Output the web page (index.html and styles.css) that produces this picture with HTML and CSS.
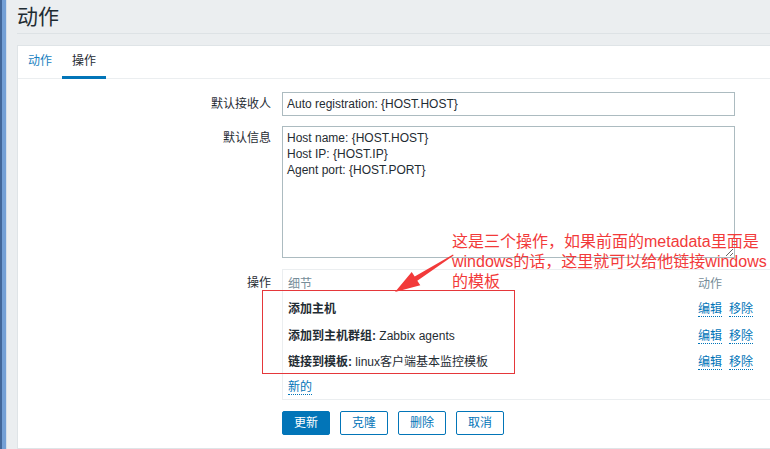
FILE: index.html
```html
<!doctype html>
<html lang="zh-CN">
    <head>
        <meta charset="utf-8">
        <title>动作</title>
        <link rel="stylesheet" href="styles.css">
    </head>
    <body>
        <div class="edge"></div>
        <div class="page">
            <div class="header">
                <h1>动作</h1>
            </div>
            <div class="panel">
                <ul class="tabs">
                    <li class="tab"><a>动作</a></li>
                    <li class="tab active"><a>操作</a></li>
                </ul>
                <div class="form">
                    <div class="row">
                        <label class="label">默认接收人</label>
                        <input class="field" type="text" value="Auto registration: {HOST.HOST}">
                    </div>
                    <div class="row">
                        <label class="label label-top">默认信息</label>
                        <textarea class="field area">Host name: {HOST.HOST}
Host IP: {HOST.IP}
Agent port: {HOST.PORT}</textarea>
                    </div>
                    <div class="row row-ops">
                        <label class="label label-ops">操作</label>
                        <div class="ops">
                            <div class="ops-head">
                                <span class="col-detail">细节</span>
                                <span class="col-action">动作</span>
                            </div>
                            <div class="ops-row first">
                                <span class="col-detail"><b>添加主机</b></span>
                                <span class="col-action"><a class="link">编辑</a><a class="link">移除</a></span>
                            </div>
                            <div class="ops-row">
                                <span class="col-detail"><b>添加到主机群组:</b> Zabbix agents</span>
                                <span class="col-action"><a class="link">编辑</a><a class="link">移除</a></span>
                            </div>
                            <div class="ops-row">
                                <span class="col-detail"><b>链接到模板:</b> linux客户端基本监控模板</span>
                                <span class="col-action"><a class="link">编辑</a><a class="link">移除</a></span>
                            </div>
                            <div class="ops-new">
                                <a class="link">新的</a>
                            </div>
                        </div>
                    </div>
                    <div class="buttons">
                        <button class="btn primary">更新</button>
                        <button class="btn">克隆</button>
                        <button class="btn">删除</button>
                        <button class="btn">取消</button>
                    </div>
                </div>
            </div>
        </div>

        <!-- annotation drawn over the screenshot -->
        <div class="note-box"></div>
        <svg class="note-arrow" width="770" height="449" viewBox="0 0 770 449">
            <polygon points="453,254.5 453.6,255.6 417.3,280.7 420.3,285.3 395,292 411.7,271.9 414.7,276.5" fill="#f23a3a"/>
        </svg>
        <p class="note-text">这是三个操作，如果前面的metadata里面是<br>windows的话，这里就可以给他链接windows<br>的模板</p>
    </body>
</html>
```

FILE: styles.css
```css
body {
    margin: 0;
    background: #ebeef0;
    font-family: "Liberation Sans", "Noto Sans CJK SC", sans-serif;
    font-size: 12px;
    color: #1f2c33;
    display: flex;
    height: 449px;
    overflow: hidden;
}
.edge {
    width: 7px;
    flex: none;
    background: linear-gradient(to right, #42679a 0 2px, #74a0d6 2px 6px, #d5dfea 6px 7px);
}
.page {
    flex: 1;
    padding-left: 10px;
    display: flex;
    flex-direction: column;
}
.header {
    height: 33px;
    border-bottom: 1px solid #dde2e5;
}
h1 {
    margin: 0;
    font-size: 21px;
    font-weight: normal;
    line-height: 33px;
    color: #1f2c33;
}
.panel {
    flex: 1;
    margin-top: 11px;
    margin-right: -20px;
    background: #ffffff;
    border: 1px solid #dfe4e7;
}

/* tabs */
.tabs {
    list-style-type: none;
    margin: 0;
    padding: 0;
    display: flex;
    border-bottom: 1px solid #ebeef0;
}
.tab a {
    display: block;
    padding: 0 10px;
    line-height: 30px;
    border-bottom: 3px solid transparent;
    margin-bottom: -1px;
    color: #1a7fc1;
}
.tab.active a {
    color: #1f2c33;
    border-bottom-color: #0275b8;
}

/* form */
.form {
    padding-top: 13px;
}
.row {
    display: grid;
    grid-template-columns: 253px 1fr;
    column-gap: 11px;
    margin-bottom: 10px;
}
.row-ops {
    margin-bottom: 11px;
}
.label {
    text-align: right;
    line-height: 24px;
}
.label-top {
    line-height: 16px;
    padding-top: 4px;
}
.label-ops {
    line-height: 18px;
    padding-top: 5px;
}
.field {
    width: 453px;
    box-sizing: border-box;
    height: 24px;
    border: 1px solid #acbbc0;
    padding: 0 4px;
    font-family: "Liberation Sans", "Noto Sans CJK SC", sans-serif;
    font-size: 12px;
    color: #1f2c33;
    margin: 0;
}
.area {
    height: 132px;
    padding: 3px 4px;
    line-height: 16px;
    resize: both;
    margin-bottom: 1px;
}

/* operations list */
.ops {
    width: 500px;
    border: 1px solid #ebeef0;
    padding: 4px 5px 0 5px;
}
.ops-head,
.ops-row {
    display: grid;
    grid-template-columns: 410px 1fr;
}
.ops-head {
    line-height: 20px;
    color: #768d99;
}
.ops-row {
    line-height: 26.5px;
}
.ops-row.first {
    margin-top: 2px;
}
.ops-new {
    line-height: 23px;
}
.link {
    display: inline-block;
    line-height: 14px;
    color: #0275b8;
    border-bottom: 1px dotted #0275b8;
    margin-right: 7px;
}

/* buttons */
.buttons {
    padding-left: 264px;
    display: flex;
    gap: 10px;
}
.btn {
    height: 24px;
    padding: 0 11px;
    border: 1px solid #0275b8;
    border-radius: 2px;
    background: #ffffff;
    color: #0275b8;
    font-family: "Liberation Sans", "Noto Sans CJK SC", sans-serif;
    font-size: 12px;
    line-height: 22px;
}
.btn.primary {
    background: #0275b8;
    color: #ffffff;
}

/* red annotation */
.note-box {
    position: absolute;
    left: 262px;
    top: 290px;
    width: 251px;
    height: 82px;
    border: 1px solid #e5373a;
}
.note-arrow {
    position: absolute;
    left: 0;
    top: 0;
}
.note-text {
    position: absolute;
    left: 452px;
    top: 232px;
    margin: 0;
    font-size: 16px;
    line-height: 20px;
    color: #f23a3a;
    white-space: nowrap;
}
```
